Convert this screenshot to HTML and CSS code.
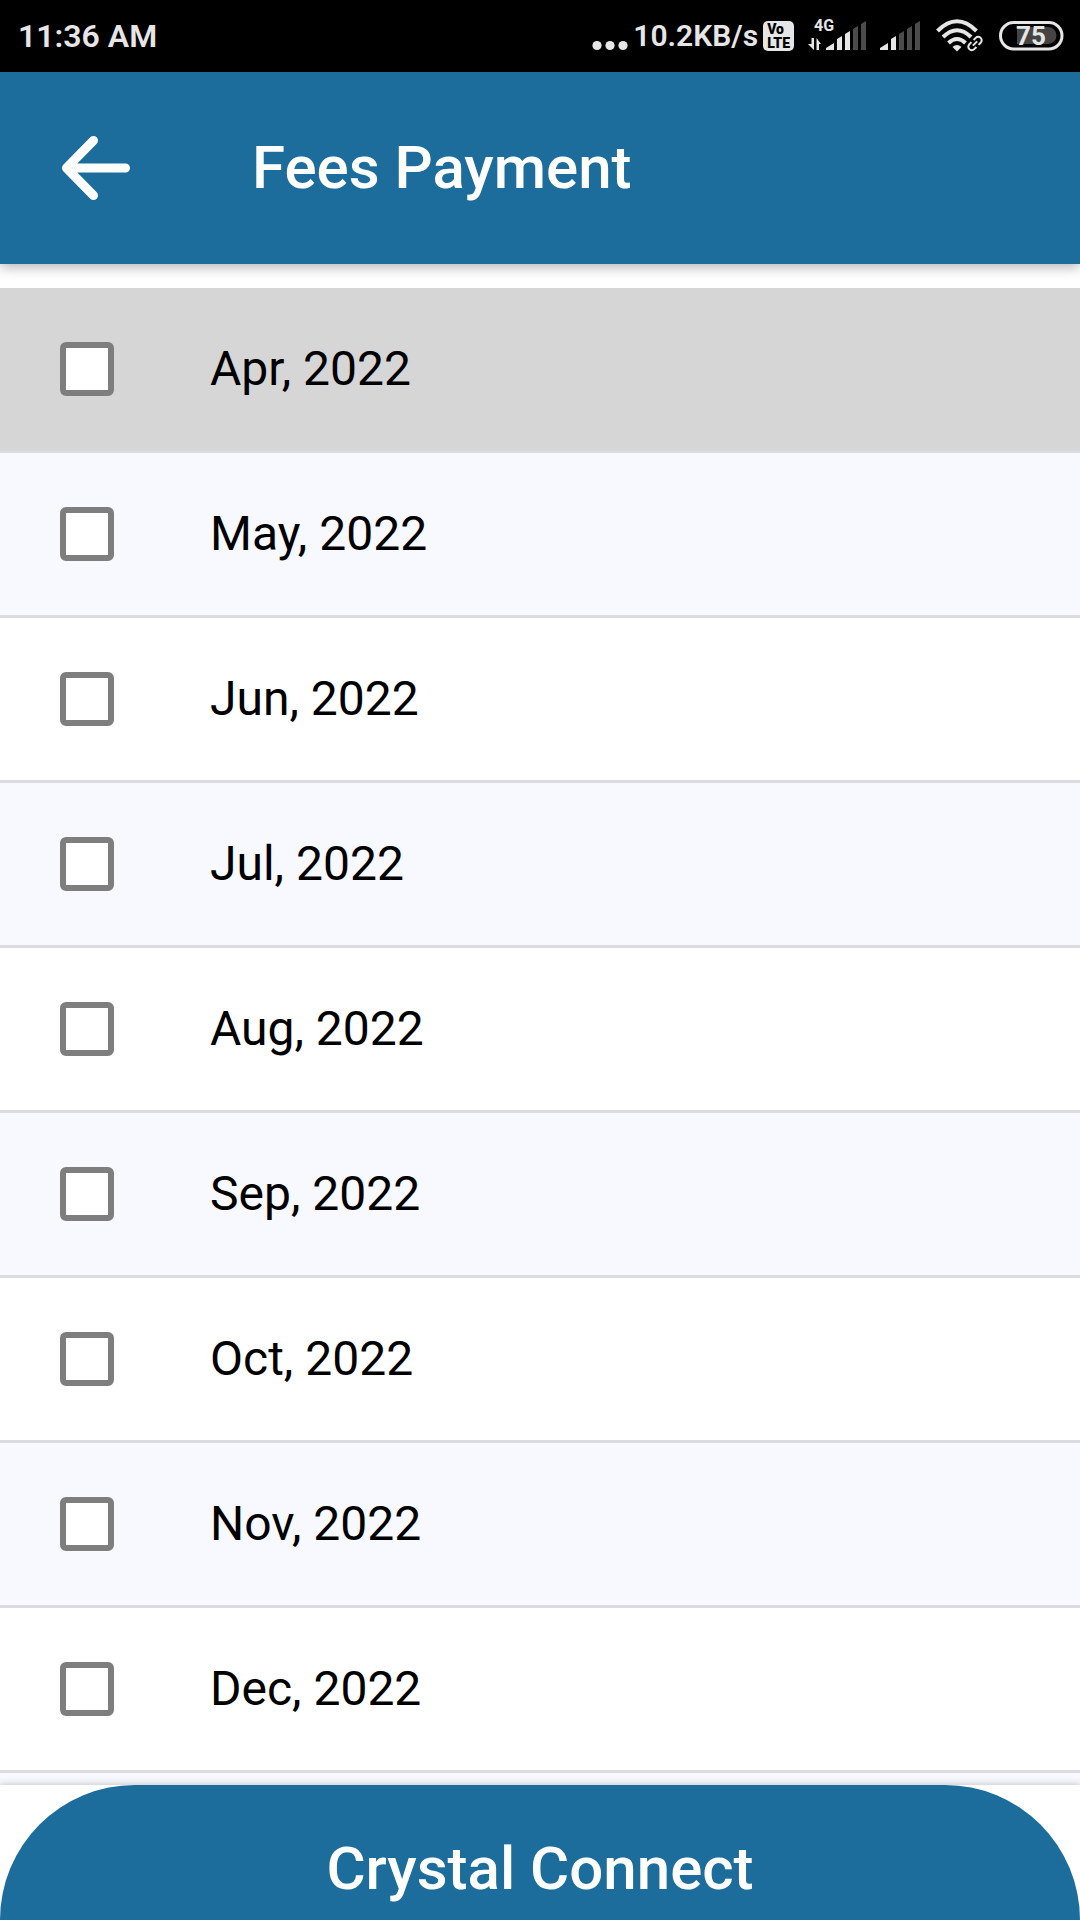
FILE: index.html
```html
<!DOCTYPE html>
<html lang="en">
<head>
    <meta charset="UTF-8">
    <meta name="viewport" content="width=device-width, initial-scale=1.0">
    <title>Fees Payment</title>
    <link rel="stylesheet" href="styles.css">
</head>
<body>
    <div class="status-bar">
        <span>11:36 AM</span>
        <div class="status-icons">
            <div class="network">
                <svg width="36" height="36" viewBox="0 0 36 36" fill="#e6e6e6">
                    <circle cx="5" cy="27.5" r="4.6"/>
                    <circle cx="18" cy="27.5" r="4.6"/>
                    <circle cx="31" cy="27.5" r="4.6"/>
                </svg>
                <span class="speed">10.2KB/s</span>
                <span class="volte"><span>Vo</span><span>LTE</span></span>
            </div>
            <svg width="58" height="48" viewBox="0 -6 58 48" fill="#e6e6e6">
                <text class="signal-type" x="6" y="13">4G</text>
                <path d="M3.5 20h2.5v12L0 26h3.5zM8.5 32V20l4.500 6H11v6z"/>
                <path d="M18 32v-2l8-5v7zM29 32V21l5-3v14zM37 32V16l5-3v19z"/>
                <path fill="#4b4b4b" d="M45 32V11l5-3v24zM53 32V6l5-3v29z"/>
            </svg>
            <svg width="40" height="36" viewBox="0 0 40 36" fill="#e6e6e6">
                <path d="M0 32v-2l8-5v7zM11 32V21l5-3v14z"/>
                <path fill="#4b4b4b" d="M19 32V16l5-3v19zM27 32V11l5-3v24zM35 32V6l5-3v29z"/>
            </svg>
            <svg width="51" height="36" viewBox="0 0 51 36" fill="none" stroke="#e6e6e6">
                <path stroke-width="4" d="M3.500 13Q23 -6.500 42.500 13M9 19Q23 5.500 37 19M14.500 25Q23 17 31.500 25"/>
                <path fill="#e6e6e6" stroke="none" d="M18.500 29Q23 25 27.500 29L23 33.500z"/>
                <g transform="rotate(-45 41 25.500)">
                    <rect x="32.500" y="21.500" width="17" height="8" rx="4" fill="#000" stroke="#000" stroke-width="4"/>
                    <path stroke-width="2" d="M39.500 29H36.500a3.500 3.500 0 0 1 0-7H39.500M42.500 22h3a3.500 3.500 0 0 1 0 7h-3M38 25.500h6"/>
                </g>
            </svg>
            <svg width="65" height="36" viewBox="0 0 65 36">
                <path fill="#444" d="M18 9h31a8.500 8.500 0 0 1 0 17H18z"/>
                <rect x="1.500" y="4.500" width="61.500" height="26.500" rx="13.250" fill="none" stroke="#e6e6e6" stroke-width="3"/>
                <text class="battery-level" x="32" y="27" text-anchor="middle">75</text>
            </svg>
        </div>
    </div>

    <header class="toolbar">
        <button type="button" class="back" aria-label="Back">
            <svg width="68" height="64" viewBox="0 0 68 64" fill="none" stroke="#fff" stroke-width="9" stroke-linecap="round" stroke-linejoin="round">
                <path d="M31.500 4.500L4.500 32l27 27.500M6 32h57.500"/>
            </svg>
        </button>
        <h1>Fees Payment</h1>
    </header>

    <main>
        <ul class="months">
            <li class="pressed"><label><input type="checkbox" name="month" value="2022-04">Apr, 2022</label></li>
            <li><label><input type="checkbox" name="month" value="2022-05">May, 2022</label></li>
            <li><label><input type="checkbox" name="month" value="2022-06">Jun, 2022</label></li>
            <li><label><input type="checkbox" name="month" value="2022-07">Jul, 2022</label></li>
            <li><label><input type="checkbox" name="month" value="2022-08">Aug, 2022</label></li>
            <li><label><input type="checkbox" name="month" value="2022-09">Sep, 2022</label></li>
            <li><label><input type="checkbox" name="month" value="2022-10">Oct, 2022</label></li>
            <li><label><input type="checkbox" name="month" value="2022-11">Nov, 2022</label></li>
            <li><label><input type="checkbox" name="month" value="2022-12">Dec, 2022</label></li>
        </ul>
    </main>

    <footer>
        <div class="footer-title">Crystal Connect</div>
    </footer>
</body>
</html>
```
FILE: styles.css
```css
* {
    box-sizing: border-box;
}

body {
    margin: 0;
    height: 100vh;
    display: flex;
    flex-direction: column;
    font-family: Roboto, sans-serif;
    background-color: #fff;
    color: #000;
}

.status-bar {
    display: flex;
    flex-shrink: 0;
    justify-content: space-between;
    align-items: center;
    padding: 0 16px 0 18px;
    background-color: #000;
    color: #e6e6e6;
    font-size: 32px;
    font-weight: 600;
    line-height: 72px;
}

.status-icons {
    display: flex;
    align-items: center;
    gap: 14px;
}

.network {
    display: flex;
    align-items: center;
    gap: 5px;
}

.speed {
    font-size: 30px;
}

.volte {
    display: flex;
    flex-direction: column;
    align-items: flex-start;
    padding: 1px 4px;
    border-radius: 5px;
    background-color: #e6e6e6;
    color: #000;
    font-size: 14px;
    font-weight: 900;
    line-height: 14px;
}

.signal-type {
    font-size: 16px;
    font-weight: 700;
}

.battery-level {
    fill: #e6e6e6;
    font-size: 26px;
    font-weight: 700;
}

.toolbar {
    display: flex;
    flex-shrink: 0;
    align-items: center;
    gap: 122px;
    padding: 60px 62px;
    background-color: #1c6d9c;
    color: #fff;
    z-index: 1;
    box-shadow: 0 3px 12px rgba(0, 0, 0, 0.3);
}

.toolbar h1 {
    margin: 0;
    font-size: 60px;
    font-weight: 500;
    line-height: 72px;
}

.back {
    display: flex;
    padding: 0;
    border: none;
    background: none;
    cursor: pointer;
}

main {
    flex: 1;
    min-height: 0;
    padding-top: 24px;
    overflow: auto;
    scrollbar-width: none;
}

.months {
    min-height: 100%;
    margin: 0;
    padding: 0;
    list-style: none;
    background-color: #f8f9fe;
}

.months li {
    background-color: #fff;
    border-bottom: 3px solid #dcdce0;
}

.months li:nth-child(even) {
    background-color: #f8f9fe;
}

.months .pressed {
    background-color: #d6d6d6;
}

.months label {
    display: flex;
    align-items: center;
    gap: 96px;
    padding: 51px 60px;
    font-size: 48px;
    line-height: 60px;
}

.months input {
    appearance: none;
    width: 54px;
    height: 54px;
    margin: 0;
    border: 6px solid #7e7e7e;
    border-radius: 6px;
    background-color: #fff;
}

.months input:checked {
    border-color: #1c6d9c;
    background-color: #1c6d9c;
}

footer {
    flex-shrink: 0;
    z-index: 1;
    background-color: #fff;
    box-shadow: 0 -1px 7px rgba(0, 0, 0, 0.2);
}

.footer-title {
    padding: 48px 0 15px;
    border-radius: 135px 135px 0 0;
    background-color: #1c6d9c;
    color: #fff;
    font-size: 60px;
    font-weight: 500;
    line-height: 72px;
    text-align: center;
}
```
